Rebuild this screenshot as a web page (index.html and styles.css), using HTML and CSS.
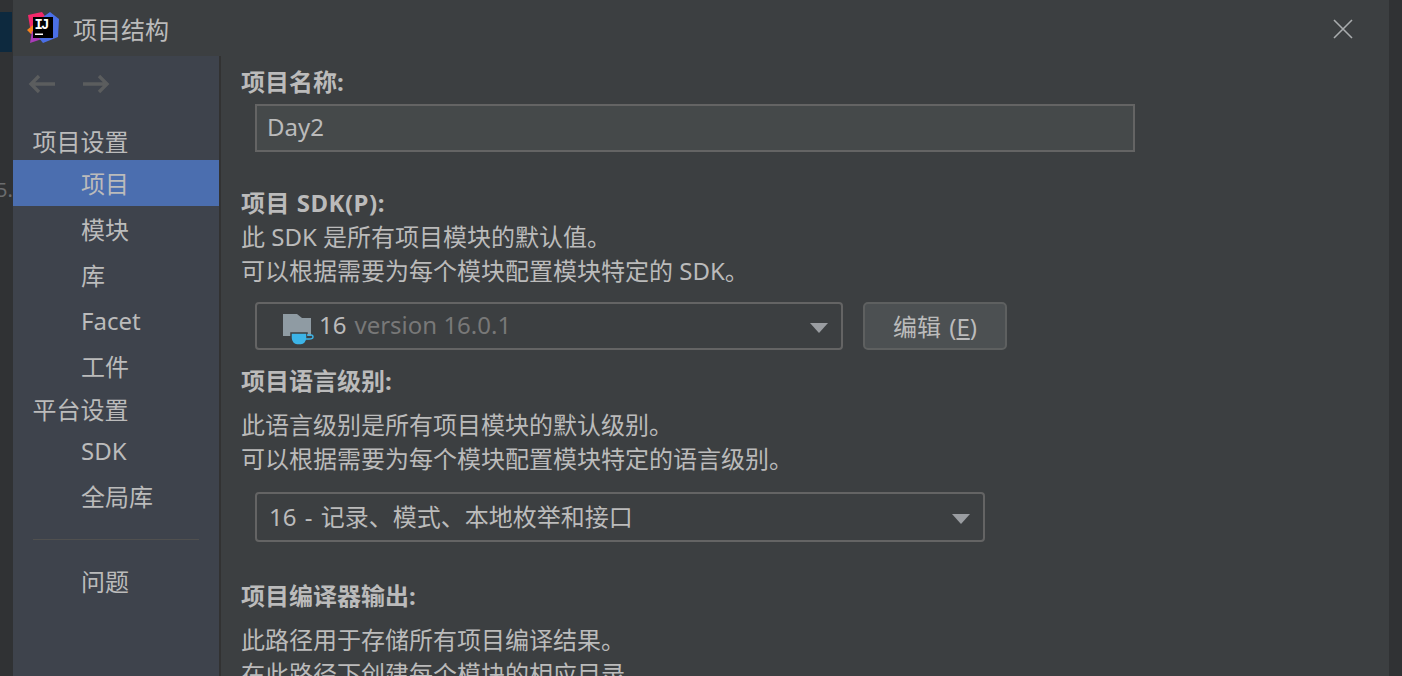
FILE: index.html
```html
<!DOCTYPE html>
<html lang="zh-CN">

<head>
  <meta name="viewport" content="width=device-width, initial-scale=1.0">
  <meta charset="utf-8">
  <title>项目结构</title>
  <link rel="stylesheet" href="styles.css">
</head>

<body>
  <div class="desktop">
    <div class="behind behind-left">
      <div class="behind-tab"></div>
      <div class="behind-text">5.</div>
    </div>

    <div class="dialog">
      <div class="titlebar">
        <svg class="logo" width="34" height="34" viewBox="0 0 34 34">
          <polygon points="1,4 15,1 20,8 8,20 3,16" fill="#f2296b" />
          <polygon points="0,19 6,14 8,22 4,23" fill="#f7821e" />
          <polygon points="3,32 5,20 18,27" fill="#a93bb8" />
          <polygon points="16,6 23,1 32,8 31,26 16,32 12,27" fill="#4a6fe6" />
          <rect x="6" y="6" width="20" height="21" fill="#000" />
          <rect x="8" y="22.5" width="8" height="1.5" fill="#fff" />
          <text class="logo-text" x="7.5" y="18">IJ</text>
        </svg>
        <span class="title">项目结构</span>
        <svg class="close" width="20" height="20" viewBox="0 0 20 20">
          <path d="M1 1 L19 19 M19 1 L1 19" stroke="#a9acae" stroke-width="1.6" fill="none" />
        </svg>
      </div>

      <div class="content">
        <div class="sidebar">
          <div class="history">
            <svg width="28" height="20" viewBox="0 0 28 20">
              <path d="M27 10 H3 M11 2 L3 10 L11 18" stroke="#5b5d5e" stroke-width="3.4" fill="none" />
            </svg>
            <svg width="28" height="20" viewBox="0 0 28 20">
              <path d="M1 10 H25 M17 2 L25 10 L17 18" stroke="#5b5d5e" stroke-width="3.4" fill="none" />
            </svg>
          </div>
          <div class="group">项目设置</div>
          <div class="item current">项目</div>
          <div class="item">模块</div>
          <div class="item">库</div>
          <div class="item">Facet</div>
          <div class="item">工件</div>
          <div class="group group-two">平台设置</div>
          <div class="item">SDK</div>
          <div class="item">全局库</div>
          <div class="divider"></div>
          <div class="item">问题</div>
        </div>

        <div class="main">
          <div class="label first">项目名称:</div>
          <div class="input">Day2</div>

          <div class="label sdk-label">项目 SDK(P):</div>
          <div class="desc">此 SDK 是所有项目模块的默认值。</div>
          <div class="desc">可以根据需要为每个模块配置模块特定的 SDK。</div>
          <div class="row">
            <div class="select select-sdk">
              <svg class="folder" width="32" height="38" viewBox="0 0 32 38">
                <path d="M0 7 H14 L19 11 H28 V29 H0 Z" fill="#8f9ba3" />
                <path d="M8 26 H24 V31 C24 35 21 38 18 38 H14 C11 38 8 35 8 31 Z" fill="#3cb4e7" stroke="#3c3f41" stroke-width="1.5" />
                <path d="M24 28 H28 Q30 28 30 30 Q30 32 26 32 H23" stroke="#3cb4e7" stroke-width="1.4" fill="none" />
              </svg>
              <span>16</span><span class="muted">version 16.0.1</span>
              <i class="arrow"></i>
            </div>
            <div class="button">编辑 (<u>E</u>)</div>
          </div>

          <div class="label lang-label">项目语言级别:</div>
          <div class="desc lang-desc">此语言级别是所有项目模块的默认级别。</div>
          <div class="desc">可以根据需要为每个模块配置模块特定的语言级别。</div>
          <div class="select select-lang">
            <span>16 - 记录、模式、本地枚举和接口</span>
            <i class="arrow"></i>
          </div>

          <div class="label output-label">项目编译器输出:</div>
          <div class="desc lang-desc">此路径用于存储所有项目编译结果。</div>
          <div class="desc">在此路径下创建每个模块的相应目录。</div>
        </div>
      </div>
    </div>

    <div class="behind behind-right"></div>
  </div>
</body>

</html>
```

FILE: styles.css
```css
html, body, div {
  margin: 0;
  padding: 0;
}

body {
  background: #2b2b2b;
  color: #bbbbbb;
  font: 24px/34px "Noto Sans", "Noto Sans CJK SC", sans-serif;
  overflow: hidden;
}

.desktop {
  display: flex;
  width: 1402px;
  height: 676px;
  overflow: hidden;
}

.behind {
  flex: none;
  width: 13px;
  background: #303234;
}

.behind-left {
  overflow: hidden;
  padding-top: 12px;
}

.behind-tab {
  width: 12px;
  height: 40px;
  background: #0d293e;
}

.behind-text {
  margin-top: 121px;
  margin-left: -4px;
  color: #6a6c6e;
  font-size: 20px;
}

.dialog {
  flex: none;
  width: 1376px;
  display: flex;
  flex-direction: column;
  background: #3c3f41;
}

.titlebar {
  flex: none;
  height: 56px;
  display: flex;
  align-items: center;
  padding: 0 36px 0 14px;
}

.logo {
  flex: none;
}

.logo-text {
  fill: #fff;
  font: bold 14px "Liberation Mono", monospace;
  letter-spacing: -2px;
}

.title {
  margin-left: 12px;
  margin-top: 4px;
}

.close {
  margin-left: auto;
  margin-top: 2px;
}

.content {
  flex: 1;
  display: flex;
  min-height: 0;
}

.sidebar {
  flex: none;
  width: 206px;
  background: #3e434c;
  border-right: 2px solid #323232;
}

.history {
  display: flex;
  gap: 26px;
  height: 69px;
  padding: 18px 0 0 15px;
  box-sizing: border-box;
}

.group {
  height: 35px;
  padding-left: 19.5px;
}

.group-two {
  height: 34px;
  margin-top: 4.25px;
}

.item {
  height: 45.75px;
  line-height: 48px;
  padding-left: 68px;
}

.item.current {
  background: #4b6eaf;
}

.divider {
  height: 1px;
  margin: 20.5px 20px 18px;
  background: #50504f;
}

.main {
  flex: 1;
  padding-left: 20px;
  min-width: 0;
}

.label {
  font-weight: bold;
}

.first {
  margin-top: 9px;
}

.input {
  width: 866px;
  height: 44px;
  margin: 5px 0 0 14px;
  padding-left: 10px;
  line-height: 42px;
  background: #45494a;
  border: 2px solid #646464;
}

.sdk-label {
  margin-top: 34px;
  letter-spacing: 0.5px;
}

.row {
  display: flex;
  gap: 20px;
  margin: 14px 0 0 14px;
}

.select {
  position: relative;
  display: flex;
  align-items: center;
  height: 44px;
  border: 2px solid #646464;
  border-radius: 4px;
}

.select-sdk {
  width: 584px;
}

.select-sdk span {
  margin-top: -2px;
}

.select-lang {
  height: 46px;
  margin: 16px 0 0 14px;
  padding-left: 12px;
  width: 714px;
  word-spacing: 2px;
}

.select-lang .arrow {
  top: 20px;
}

.folder {
  margin-left: 26px;
  margin-right: 4px;
}

.muted {
  margin-left: 8px;
  color: #787878;
}

.arrow {
  position: absolute;
  right: 13px;
  top: 19px;
  border-left: 9px solid transparent;
  border-right: 9px solid transparent;
  border-top: 10px solid #9a9da1;
}

.button {
  width: 140px;
  height: 44px;
  line-height: 46px;
  text-align: center;
  word-spacing: 2px;
  background: #4c5052;
  border: 2px solid #5e6060;
  border-radius: 5px;
}

.lang-label {
  margin-top: 14px;
}

.lang-desc {
  margin-top: 10px;
}

.output-label {
  margin-top: 37px;
}
```
